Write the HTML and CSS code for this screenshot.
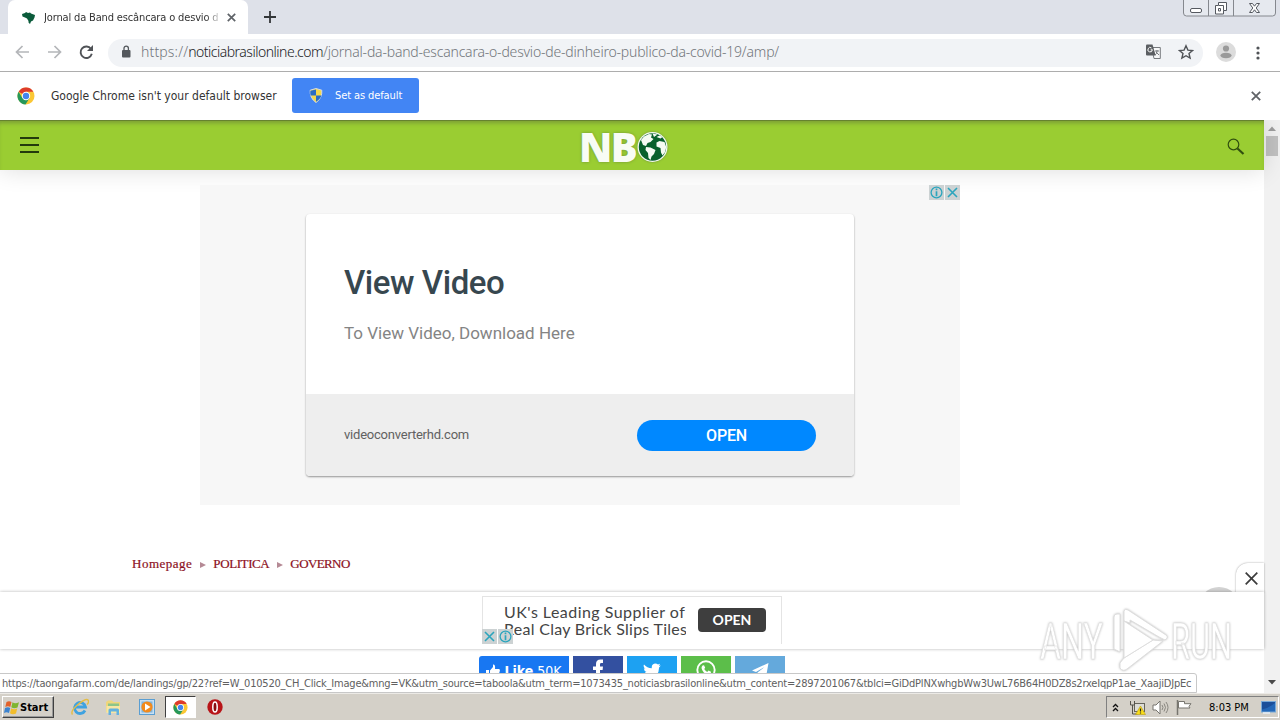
FILE: index.html
```html
<!DOCTYPE html>
<html lang="pt-br">
<head>
    <meta charset="UTF-8">
    <title>Jornal da Band escâncara o desvio</title>
    <link rel="stylesheet" href="styles.css">
</head>
<body>
<svg width="0" height="0" class="defs">
    <symbol id="chrome" viewBox="0 0 18 18">
        <circle cx="9" cy="9" r="8.5" fill="#fbc734"/>
        <path d="M9 9L1.6 4.7A8.5 8.5 0 0 1 16.4 4.8H9z" fill="#dd3b2c"/>
        <path d="M1.6 4.7A8.5 8.5 0 0 0 8.5 17.5L12.6 11 9 9 5.4 11z" fill="#26985a"/>
        <circle cx="9" cy="9" r="4.2" fill="#fff"/>
        <circle cx="9" cy="9" r="3.2" fill="#4485ee"/>
    </symbol>
    <symbol id="adinfo" viewBox="0 0 15 15">
        <rect width="15" height="15" fill="#ccd2d3"/>
        <circle cx="7.5" cy="7.5" r="5.4" fill="none" stroke="#2ba5bd" stroke-width="1.3"/>
        <path d="M7.5 3.6v1.6M7.5 6.3v5" stroke="#2ba5bd" stroke-width="1.7"/>
    </symbol>
    <symbol id="adclose" viewBox="0 0 15 15">
        <rect width="15" height="15" fill="#ccd2d3"/>
        <path d="M3 3l9 9M12 3l-9 9" stroke="#2ba5bd" stroke-width="1.6"/>
    </symbol>
</svg>

<div class="tabstrip">
    <div class="tab">
        <svg class="favicon" width="13" height="13" viewBox="0 0 13 13"><path d="M0 3l3-1 1-1 2 1 2-.5L9 2.500l4 1.500-.5 2.500-1.500 3-2 1L8 13l-1.500-1.500L6.500 10 5 7.500 3 6.500 .5 5.500z" fill="#0b5b3b"/></svg>
        <span class="tab-title">Jornal da Band escâncara o desvio de</span>
        <svg width="9" height="9" viewBox="0 0 9 9"><path d="M.8.8l7.400 7.400M8.200.8L.8 8.200" stroke="#5f6368" stroke-width="1.700"/></svg>
    </div>
    <svg class="newtab" width="12" height="12" viewBox="0 0 12 12"><path d="M6 0v12M0 6h12" stroke="#333639" stroke-width="1.800"/></svg>
    <svg class="winbuttons" width="94" height="17" viewBox="0 0 94 17">
        <path d="M.5 0v13q0 3 3 3h86q3 0 3-3V0M25.500 0v16M50.500 0v16" fill="#e6e9ef" stroke="#85888e"/>
        <rect x="7.500" y="8.500" width="11" height="4" rx="1.500" fill="#fff" stroke="#555960"/>
        <path d="M35.500 2.500h8v8h-3v3.500h-8V5.500h3z" fill="#fff" stroke="#555960"/>
        <path d="M36 5.500h4.500v5M35.500 8.500h2v2.500h-2z" fill="none" stroke="#555960"/>
        <path d="M66.500 3.500h3l2 2.700 2-2.700h3l-3.300 4.500 3.300 4.500h-3l-2-2.700-2 2.700h-3l3.300-4.500z" fill="#fff" stroke="#555960"/>
    </svg>
</div>

<div class="toolbar">
    <svg class="nav-icons" width="80" height="16" viewBox="0 0 80 16">
        <path d="M14 8H1.500M7.500 2l-6 6 6 6M33 8h12.500M39.500 2l6 6-6 6" fill="none" stroke="#b4b6b9" stroke-width="1.700"/>
        <path d="M76 5A5.700 5.700 0 1 0 76.800 9.800" fill="none" stroke="#505357" stroke-width="1.900"/>
        <path d="M78 1v6h-6z" fill="#505357"/>
    </svg>
    <div class="omnibox">
        <svg width="10" height="13" viewBox="0 0 10 13"><rect x="1" y="5" width="8.500" height="7.500" rx="1" fill="#54585d"/><path d="M3 5.500V3.300a2.200 2.200 0 0 1 4.400 0v2.200" fill="none" stroke="#54585d" stroke-width="1.300"/></svg>
        <div class="url"><span class="u1">https://</span><span class="u2">noticiabrasilonline.com</span><span class="u3">/jornal-da-band-escancara-o-desvio-de-dinheiro-publico-da-covid-19/amp/</span></div>
        <svg width="15" height="15" viewBox="0 0 15 15">
            <path d="M5.500 3.500h8.800v11H8z" fill="#f6f7f8" stroke="#777a7e"/>
            <path d="M0 1.500Q0 .5 1 .5h5.500l3.200 11H1q-1 0-1-1z" fill="#5b5e62"/>
            <path d="M6.500 5.800H4.700M6.300 5.800A2.200 2.200 0 1 1 5.500 4" fill="none" stroke="#fff"/>
            <path d="M9 7h4M11 6v1q0 3-2 4M10 8l3 3" fill="none" stroke="#777a7e"/>
        </svg>
        <svg class="star" width="16" height="16" viewBox="0 0 16 16"><path d="M8 1.800l1.900 4.300 4.600.4-3.500 3 1.100 4.600L8 11.700l-4.100 2.400L5 9.500l-3.500-3 4.600-.4z" fill="none" stroke="#505357" stroke-width="1.400"/></svg>
    </div>
    <svg class="avatar" width="20" height="20" viewBox="0 0 20 20"><circle cx="10" cy="10" r="10" fill="#dcdcdc"/><circle cx="10" cy="6.500" r="3.100" fill="#9a9a9a"/><ellipse cx="10" cy="13.500" rx="5.600" ry="2.800" fill="#9a9a9a"/></svg>
    <svg width="4" height="14" viewBox="0 0 4 14" fill="#505357"><circle cx="2" cy="2" r="1.600"/><circle cx="2" cy="7" r="1.600"/><circle cx="2" cy="12" r="1.600"/></svg>
</div>

<div class="infobar">
    <svg width="18" height="18"><use href="#chrome"/></svg>
    <span class="info-text">Google Chrome isn't your default browser</span>
    <div class="info-btn">
        <svg width="14" height="15" viewBox="0 0 14 15">
            <path d="M7 .5l5.800 1.700Q13.500 10 7 14.500.5 10 1.200 2.200z" fill="#f4d84c" stroke="#d5dbe0"/>
            <path d="M7 1.500v6H1.500q-.4-2.500-.1-4.800zM7 7.500h5.400Q11.500 11 7 13.800z" fill="#2a6cc4"/>
        </svg>
        <span>Set as default</span>
    </div>
    <svg class="info-close" width="10" height="10" viewBox="0 0 10 10"><path d="M.8.8l8.400 8.400M9.200.8L.8 9.200" stroke="#606367" stroke-width="1.800"/></svg>
</div>

<div class="view">
    <div class="page">
        <div class="header">
            <svg class="menu" width="20" height="18" viewBox="0 0 20 18"><path d="M0 2h19M0 9h19M0 16h19" stroke="#233a0c" stroke-width="1.900"/></svg>
            <div class="logo">
                <span>NB</span>
                <svg width="31" height="32" viewBox="0 0 31 32">
                    <circle cx="15.500" cy="16" r="15" fill="#f5faf3"/>
                    <circle cx="15.500" cy="16" r="13.700" fill="#08602c"/>
                    <path d="M4 9L7 5.500 12 3l3 .5-1 3 2.500 1.500-3 3-3 1-1.500 3L6 14zM15.500 2.500l5 1L17 6zM19.500 6l3-1.500 3 1.500-2 1.500zM9 16l4.500.5 5 2.500-1.500 4-2.500 2.500-1 3.500-2-2-.5-5L8.500 19zM19.500 11.500l3-1.500 5 1 1.700 5-1 5-2.700 3.500-1.500-3-.5-4.500-4-1.500z" fill="#f5faf3"/>
                </svg>
            </div>
            <svg class="search" width="18" height="18" viewBox="0 0 18 18"><circle cx="6.500" cy="6.500" r="5.300" fill="none" stroke="#31500f" stroke-width="1.200"/><path d="M10.500 10.500L16.500 16" stroke="#31500f" stroke-width="2.200"/></svg>
        </div>
        <div class="ad">
            <div class="ad-marks"><svg width="15" height="15"><use href="#adinfo"/></svg><svg width="15" height="15"><use href="#adclose"/></svg></div>
            <div class="card">
                <div class="card-top">
                    <div class="card-title">View Video</div>
                    <div class="card-text">To View Video, Download Here</div>
                </div>
                <div class="card-bottom">
                    <span class="card-site">videoconverterhd.com</span>
                    <div class="card-btn">OPEN</div>
                </div>
            </div>
        </div>
        <div class="breadcrumb"><span class="b1">Homepage</span><i></i><span class="b2">POLITICA</span><i></i><span class="b3">GOVERNO</span></div>
        <div class="to-top"></div>
        <div class="sticky-close"><svg width="13" height="13" viewBox="0 0 13 13"><path d="M.7.7l11.600 11.600M12.300.7L.7 12.300" stroke="#3c3c3c" stroke-width="1.700"/></svg></div>
        <div class="sticky">
            <div class="banner">
                <div class="banner-text"><span class="l1">UK's Leading Supplier of</span><span class="l2">Real Clay Brick Slips Tiles</span></div>
                <div class="banner-btn">OPEN</div>
                <div class="banner-marks"><svg width="15" height="15"><use href="#adclose"/></svg><svg width="15" height="15"><use href="#adinfo"/></svg></div>
            </div>
        </div>
        <div class="share">
            <div class="s-like">
                <svg width="14" height="14" viewBox="0 0 14 14" fill="#fff"><path d="M0 6h3v8H0zM4 6.500L7 3V.5Q9.500 0 9 5h4q1.500.5.5 3L12 13q-.5 1-2 1H6l-2-1z"/></svg>
                <b>Like</b><span>50K</span>
            </div>
            <div class="s-fb"><svg width="14" height="22" viewBox="0 0 14 22"><path d="M5 22V11H2V7.500h3V5q0-4.500 4.500-4.500H12V4h-1.700Q9 4 9 5.300v2.200h3l-.4 3.500H9v11z" fill="#fff"/></svg></div>
            <div class="s-tw"><svg width="18" height="15" viewBox="0 0 18 15"><path d="M1 1.500Q4 5 8.800 5.200 8.300 1 12 .5q2 0 3 1L17 .8 16 2.900l1.800-.4-1.700 2Q16 14.500 6 14.500 2.500 14.500.3 13q3 .2 5-1.600-2.600-.2-3.300-2.500h1.500Q1 8 .8 5.300l1.600.4Q-.2 4 1 1.500z" fill="#fff"/></svg></div>
            <div class="s-wa"><svg width="20" height="20" viewBox="0 0 20 20"><circle cx="10" cy="10" r="8.700" fill="none" stroke="#fff" stroke-width="1.900"/><path d="M6.500 5.500l1.500-.3 1.200 2.600-1 1.200q1.300 2.200 3 2.900l1.300-1.300 2.500 1.200q0 2.700-2.500 2.700Q6.500 13.500 5.500 8q0-1.500 1-2.500z" fill="#fff"/></svg></div>
            <div class="s-tg"><svg width="17" height="15" viewBox="0 0 17 15"><path d="M0 7.500L16.500 0 14 14 8.500 10.500 6 13.500 5.500 9.500 12.500 4 4 9z" fill="#fff"/></svg></div>
        </div>
    </div>
    <div class="scrollbar">
        <svg width="8" height="5" viewBox="0 0 8 5"><path d="M0 5l4-4.500L8 5z" fill="#9d9d9d"/></svg>
        <div class="thumb"></div>
        <svg class="down" width="8" height="5" viewBox="0 0 8 5"><path d="M0 0h8L4 4.500z" fill="#4a4a4a"/></svg>
    </div>
    <div class="status"><span>https://taongafarm.com/de/landings/gp/22?ref=W_010520_CH_Click_Image&amp;mng=VK&amp;utm_source=taboola&amp;utm_term=1073435_noticiasbrasilonline&amp;utm_content=2897201067&amp;tblci=GiDdPlNXwhgbWw3UwL76B64H0DZ8s2rxeIqpP1ae_XaajiDJpEc</span></div>
    <svg class="watermark" width="196" height="66" viewBox="0 0 196 66">
        <g class="wm-text">
            <text x="2" y="51" textLength="63" lengthAdjust="spacingAndGlyphs">ANY</text>
            <text x="133" y="51" textLength="61" lengthAdjust="spacingAndGlyphs">RUN</text>
        </g>
        <path d="M76 9q0-3 3-3h3v38l-6-3zM86 13V3q1-3 4-1l38 25q3 2-1 5l-6-3-29-17v3zM86 50l29-18 10 1-36 28q-4 3-7-1v-5z" class="wm-play"/>
        <path d="M86 13v37l29-18z" class="wm-play"/>
    </svg>
</div>

<div class="taskbar">
    <div class="start">
        <svg width="16" height="15" viewBox="0 0 16 15">
            <path d="M2.500 2Q5 .5 7.500 2L6.300 7Q4 5.500 1.300 7z" fill="#e2622b"/>
            <path d="M8.500 2.300Q11 4 15 2.300L13.500 7.500Q10 9 7.300 7.300z" fill="#7fb52f"/>
            <path d="M1 8Q4 6.500 6.200 8L5 13Q2.500 11.500 0 13z" fill="#3c83cf"/>
            <path d="M7.200 8.300Q10 10 13.200 8.500L12 13.500Q8.500 15 6 13.300z" fill="#f2bd2b"/>
        </svg>
        <span>Start</span>
    </div>
    <svg class="ie" width="18" height="18" viewBox="0 0 18 18"><path d="M14 12.500A5.500 5.500 0 1 1 14.500 9H5" fill="none" stroke="#3fa2e0" stroke-width="2.800"/><path d="M1.500 16.500Q-1 13 7 6.500T17 2q1.500 2-1 4.500" fill="none" stroke="#e5bd45" stroke-width="1.400"/></svg>
    <svg class="folder" width="17" height="17" viewBox="0 0 17 17"><path d="M1 3l2-1.500h4L8.500 3H15v10H1z" fill="#efd67b"/><path d="M3 4.500h11v3H3z" fill="#8cc58a"/><path d="M1.500 7H15v7H1.500z" fill="#f7e6a3"/><path d="M3.500 16V11q0-1.500 1.500-1.500h7.500q1.500 0 1.500 1.500v5h-2.500v-3.500H6V16z" fill="#62b1df"/></svg>
    <svg class="media" width="16" height="16" viewBox="0 0 16 16"><rect x=".5" y=".5" width="15" height="15" fill="#c6dff3" stroke="#5a9ed2"/><rect x="2.500" y="2.500" width="11" height="11" fill="#7fb4dc"/><circle cx="8" cy="8" r="5.600" fill="#f28a1c"/><path d="M6 4.500v7L11.500 8z" fill="#fff"/></svg>
    <div class="active-app"><svg width="15" height="15"><use href="#chrome"/></svg></div>
    <svg width="16" height="16" viewBox="0 0 16 16"><circle cx="8" cy="8" r="7.700" fill="#b81418"/><ellipse cx="8" cy="8" rx="2.200" ry="5" fill="#8a0c0e" stroke="#fff" stroke-width="1.500"/></svg>
    <div class="tray">
        <svg width="7" height="9" viewBox="0 0 7 9"><path d="M1 4l2.500-2.500L6 4M1 8l2.500-2.500L6 8" fill="none" stroke="#111" stroke-width="1.300"/></svg>
        <svg class="net" width="17" height="15" viewBox="0 0 17 15"><rect x="5.500" y="3.500" width="10" height="8" fill="#dcdcd6" stroke="#66645c"/><path d="M1.500 1v4h4V1M3.500 5v9h5" fill="none" stroke="#55534c"/><path d="M11.500 6l5 8.500h-10z" fill="#f9dd1a" stroke="#b99a10" stroke-width=".6"/><path d="M11.500 8.500v3M11.500 12.500v1" stroke="#222" stroke-width="1.200"/></svg>
        <svg class="sound" width="17" height="15" viewBox="0 0 17 15"><path d="M1 5h3l4-4v13l-4-4H1z" fill="#fff" stroke="#77756f"/><path d="M10 5q2 2.500 0 5M12 3.500q3 4 0 8M14 2q4 5.500 0 11" fill="none" stroke="#88867f"/></svg>
        <svg class="flag" width="16" height="15" viewBox="0 0 16 15"><path d="M1.500 0v15" stroke="#77756f" stroke-width="1.500"/><path d="M2.500 1.500h6v2.200H15L13 6.300 14 8H2.500z" fill="#fff" stroke="#77756f"/></svg>
        <span class="clock">8:03 PM</span>
        <svg width="15" height="13" viewBox="0 0 15 13"><rect x=".5" y=".5" width="14" height="10.500" fill="#2468b8" stroke="#77a9d8"/><path d="M1 8.500Q8 7 14 2v-1H1z" fill="#1b4f9a"/><path d="M2 12h7" stroke="#e9eff6" stroke-width="1.500"/></svg>
    </div>
</div>
</body>
</html>
```
FILE: styles.css
```css
* {
    box-sizing: border-box;
}

body {
    margin: 0;
    width: 1280px;
    height: 720px;
    overflow: hidden;
    display: flex;
    flex-direction: column;
    background: #fff;
    font-family: "DejaVu Sans Condensed", "DejaVu Sans", sans-serif;
    font-stretch: condensed;
    font-size: 11px;
    color: #333;
}

svg {
    display: block;
    flex: none;
}

span {
    white-space: nowrap;
}

.defs {
    position: absolute;
}

/* browser window */
.tabstrip {
    height: 34px;
    background: #dee1e9;
    display: flex;
    padding-left: 8px;
}

.tab {
    width: 240px;
    height: 34px;
    background: #fff;
    border-radius: 7px 7px 0 0;
    display: flex;
    align-items: center;
    padding: 0 12px 0 14px;
}

.tab-title {
    width: 175px;
    margin: 0 9px 0 9px;
    overflow: hidden;
    letter-spacing: -0.15px;
    -webkit-mask-image: linear-gradient(to right, #000 162px, transparent 178px);
    mask-image: linear-gradient(to right, #000 162px, transparent 178px);
}

.newtab {
    margin: 11px 0 0 16px;
}

.winbuttons {
    margin: 0 3px 0 auto;
}

.toolbar {
    height: 38px;
    border-bottom: 1px solid #adadad;
    display: flex;
    align-items: center;
    padding: 0 20px 0 15px;
}

.nav-icons {
    margin-top: -2px;
}

.omnibox {
    width: 1095px;
    height: 28px;
    margin-left: 13px;
    border-radius: 14px;
    background: #f1f3f6;
    display: flex;
    align-items: center;
    padding: 0 9px 2px 13px;
}

.url {
    flex: 1;
    padding-left: 10px;
    display: flex;
    font-family: "Noto Sans", sans-serif;
    font-stretch: normal;
    font-weight: 300;
    font-size: 14px;
    color: #72767b;
}

.u1 {
    letter-spacing: 0.15px;
}

.u2 {
    color: #202124;
    letter-spacing: -0.5px;
}

.u3 {
    letter-spacing: -0.2px;
}

.star {
    margin-left: 17px;
}

.avatar {
    margin: -2px auto 0 13px;
}

.infobar {
    height: 48px;
    display: flex;
    align-items: center;
    padding: 0 19px 0 17px;
}

.info-text {
    width: 257px;
    padding-left: 16px;
    font-size: 12px;
}

.info-btn {
    width: 127px;
    height: 35px;
    margin-top: -1px;
    border-radius: 3px;
    background: #4285f4;
    color: #fff;
    display: flex;
    align-items: center;
    padding-left: 17px;
    gap: 12px;
}

.info-btn span {
    letter-spacing: -0.1px;
}

.info-close {
    margin-left: auto;
}

/* page */
.view {
    height: 573px;
    display: flex;
    position: relative;
    overflow: hidden;
}

.page {
    width: 1264px;
    position: relative;
}

.header {
    height: 50px;
    background: #9acd32;
    border-top: 1px solid #66822f;
    box-shadow: inset 0 4px 4px -2px #7b9d36, 0 0 24px rgba(0, 0, 0, 0.14);
    display: flex;
    align-items: center;
    padding: 0 19px 0 20px;
}

.menu {
    margin-top: -1px;
}

.logo {
    display: flex;
    align-items: center;
    margin: 2px auto 0 539px;
}

.logo span {
    width: 58px;
    font: bold 40px/32px "Open Sans", sans-serif;
    font-weight: 800;
    letter-spacing: -1.5px;
    color: #f8fcf5;
    text-shadow: 0 0 3px #6e9238;
}

.logo svg {
    filter: drop-shadow(0 0 1px #6e9238);
}

.search {
    margin-top: 2px;
}

.ad {
    width: 760px;
    height: 320px;
    margin: 15px 0 0 200px;
    background: #f7f7f7;
    position: relative;
    padding: 29px 106px;
}

.ad-marks {
    position: absolute;
    top: 0;
    right: 0;
    display: flex;
    gap: 1px;
}

.card {
    width: 548px;
    height: 262px;
    background: #fff;
    border-radius: 4px;
    box-shadow: 0 1px 2px rgba(0, 0, 0, 0.4);
    overflow: hidden;
    font-family: Roboto, sans-serif;
    font-stretch: normal;
}

.card-top {
    height: 180px;
    padding: 49px 38px 0;
}

.card-title {
    font-size: 33px;
    line-height: 40px;
    font-weight: 500;
    letter-spacing: -0.45px;
    color: #37474f;
}

.card-text {
    margin-top: 20px;
    font-size: 17px;
    line-height: 20px;
    color: #848484;
}

.card-bottom {
    height: 82px;
    background: #eee;
    display: flex;
    align-items: center;
    justify-content: space-between;
    padding: 0 38px;
}

.card-site {
    margin-top: -2px;
    font-size: 13px;
    letter-spacing: -0.22px;
    color: #616161;
}

.card-btn {
    width: 179px;
    height: 31px;
    margin-top: 1px;
    border-radius: 16px;
    background: #08f;
    color: #fff;
    font-size: 16px;
    font-weight: 500;
    letter-spacing: -0.2px;
    line-height: 31px;
    text-align: center;
}

.breadcrumb {
    margin: 51px 0 0 132px;
    height: 16px;
    display: flex;
    align-items: center;
    font-family: "Liberation Serif", serif;
    font-stretch: normal;
    font-size: 13px;
    color: #8c1022;
    -webkit-text-stroke: 0.2px #8c1022;
}

.breadcrumb i {
    margin: 1px 7px 0 8px;
    border-left: 6px solid #b58a95;
    border-top: 3px solid transparent;
    border-bottom: 3px solid transparent;
}

.b1 {
    letter-spacing: 0.5px;
}

.b2 {
    letter-spacing: -0.4px;
}

.b3 {
    letter-spacing: -0.6px;
}

.to-top {
    position: absolute;
    left: 1198px;
    top: 467px;
    width: 42px;
    height: 42px;
    border-radius: 50%;
    background: #d2d2d2;
}

.sticky-close {
    position: absolute;
    right: 0;
    top: 443px;
    width: 28px;
    height: 30px;
    background: #fff;
    border-radius: 12px 0 0 0;
    box-shadow: 0 0 2px rgba(0, 0, 0, 0.4);
    padding: 9px 0 0 9px;
}

.sticky {
    position: relative;
    height: 57px;
    margin-top: 20px;
    background: #fff;
    box-shadow: 0 0 3px rgba(0, 0, 0, 0.3);
    display: flex;
    padding: 4px 0 0 482px;
}

.banner {
    position: relative;
    width: 300px;
    height: 48px;
    border: 1px solid #e4e4e4;
    border-bottom: 0;
    display: flex;
    padding-left: 21px;
}

.banner-text {
    width: 182px;
    overflow: hidden;
    padding-top: 6px;
    display: flex;
    flex-direction: column;
    font: 16px/17px Lato, sans-serif;
    color: #444;
}

.l1 {
    letter-spacing: 0.46px;
}

.l2 {
    letter-spacing: 0.28px;
}

.banner-btn {
    width: 68px;
    height: 24px;
    margin: 11px 0 0 12px;
    border-radius: 4px;
    background: #3e3e3e;
    color: #fff;
    font: bold 14px/23px Lato, sans-serif;
    text-align: center;
}

.banner-marks {
    position: absolute;
    left: -1px;
    bottom: 0;
    display: flex;
    gap: 1px;
}

.share {
    margin: 7px 0 0 479px;
    display: flex;
    gap: 4px;
}

.share div {
    width: 50px;
    height: 28px;
    display: flex;
    justify-content: center;
    align-items: center;
}

.share .s-like {
    width: 90px;
    background: #1877f2;
    border-radius: 3px 0 0 0;
    color: #fff;
    font-size: 14px;
    padding-top: 2px;
    gap: 4px;
}

.share .s-fb {
    background: #3350a0;
}

.share .s-tw {
    background: #1da1f2;
}

.share .s-wa {
    background: #5cbe4a;
}

.share .s-tg {
    background: #64a9dc;
}

.scrollbar {
    width: 16px;
    background: #f1f1f1;
    display: flex;
    flex-direction: column;
    align-items: center;
    padding: 6px 0 8px;
}

.thumb {
    width: 12px;
    height: 20px;
    margin-top: 5px;
    background: #c1c1c1;
}

.down {
    margin-top: auto;
}

.status {
    position: absolute;
    left: -1px;
    bottom: 0;
    width: 1198px;
    height: 20px;
    background: #fff;
    border: 1px solid #c8c8c8;
    border-radius: 0 3px 0 0;
    padding: 3px 0 0 2px;
    line-height: 14px;
    letter-spacing: -0.207px;
    color: #606060;
}

.watermark {
    position: absolute;
    left: 1038px;
    top: 488px;
    filter: drop-shadow(0 0 1px #bbb);
}

.wm-text {
    font: 50px Roboto, sans-serif;
    fill: #fff;
    stroke: #e0e0e0;
    stroke-width: 0.6px;
}

.wm-play {
    fill: #fff;
    stroke: #dedede;
}

/* windows taskbar */
.taskbar {
    height: 27px;
    background: #d4d0c8;
    border-top: 1px solid #eceae6;
    display: flex;
    align-items: center;
    padding: 0 1px 0 2px;
}

.start {
    width: 52px;
    height: 22px;
    border: 1px solid;
    border-color: #fff #404040 #404040 #fff;
    box-shadow: inset -1px -1px #999;
    display: flex;
    align-items: center;
    padding-left: 1px;
    color: #000;
    font-weight: bold;
}

.ie {
    margin-left: 17px;
}

.folder {
    margin-left: 16px;
}

.media {
    margin-left: 17px;
}

.active-app {
    width: 31px;
    height: 22px;
    margin: 0 11px 0 10px;
    background: #fff;
    border: 1px solid;
    border-color: #404040 #fff #fff #404040;
    display: flex;
    align-items: center;
    justify-content: center;
}

.tray {
    width: 173px;
    height: 22px;
    margin-left: auto;
    border: 1px solid;
    border-color: #808080 #fff #fff #808080;
    display: flex;
    align-items: center;
    padding: 0 2px 0 5px;
    color: #000;
}

.net {
    margin-left: 10px;
}

.sound {
    margin-left: 6px;
}

.flag {
    margin-left: 7px;
}

.clock {
    margin: 0 auto 0 17px;
}
```
